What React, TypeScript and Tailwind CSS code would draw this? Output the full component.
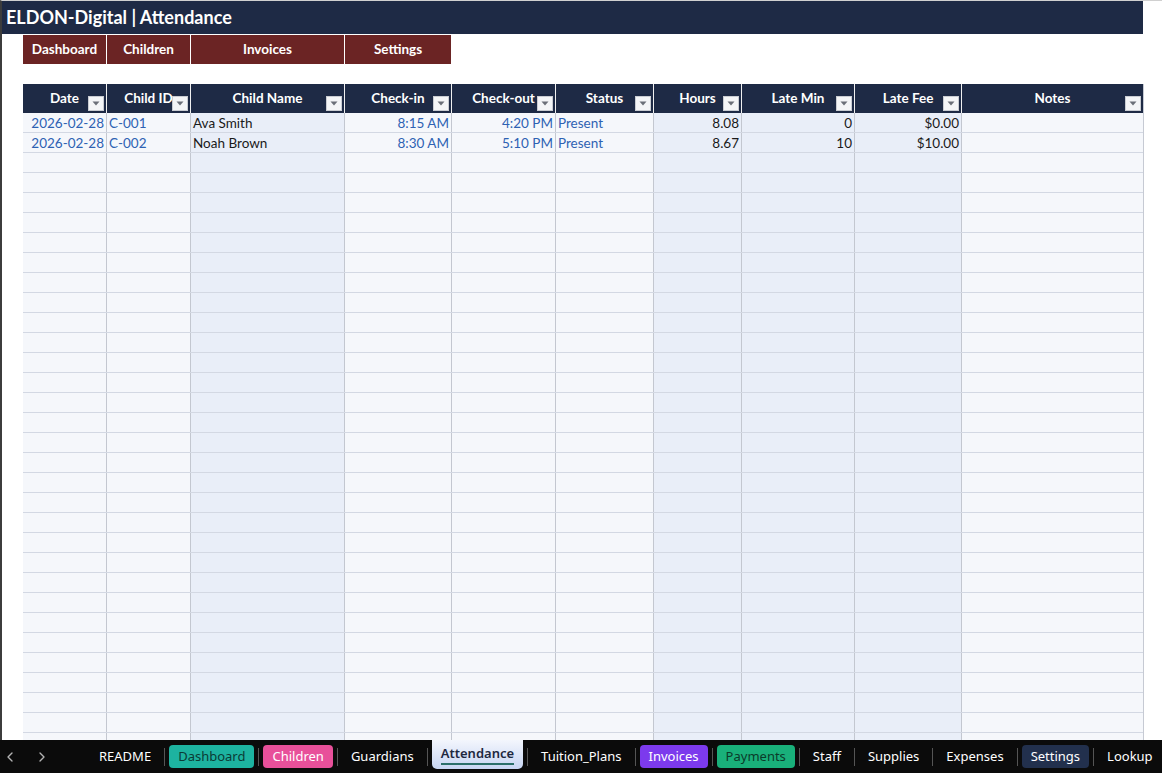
import React from "react";
import { ChevronLeft, ChevronRight } from "lucide-react";

type Col = { key: string; label: string; w: number; shade: boolean; align: "left" | "right" };

const cols: Col[] = [
  { key: "date", label: "Date", w: 84, shade: false, align: "right" },
  { key: "id", label: "Child ID", w: 84, shade: false, align: "left" },
  { key: "name", label: "Child Name", w: 154, shade: true, align: "left" },
  { key: "in", label: "Check-in", w: 107, shade: false, align: "right" },
  { key: "out", label: "Check-out", w: 104, shade: false, align: "right" },
  { key: "status", label: "Status", w: 98, shade: false, align: "left" },
  { key: "hours", label: "Hours", w: 88, shade: true, align: "right" },
  { key: "late", label: "Late Min", w: 113, shade: true, align: "right" },
  { key: "fee", label: "Late Fee", w: 107, shade: true, align: "right" },
  { key: "notes", label: "Notes", w: 181, shade: false, align: "left" },
];

const blue = new Set(["date", "id", "in", "out", "status"]);

const rows: Record<string, string>[] = [
  { date: "2026-02-28", id: "C-001", name: "Ava Smith", in: "8:15 AM", out: "4:20 PM", status: "Present", hours: "8.08", late: "0", fee: "$0.00", notes: "" },
  { date: "2026-02-28", id: "C-002", name: "Noah Brown", in: "8:30 AM", out: "5:10 PM", status: "Present", hours: "8.67", late: "10", fee: "$10.00", notes: "" },
];

const empty = Array.from({ length: 30 }, () => ({} as Record<string, string>));

const nav = [
  { label: "Dashboard", w: 84 },
  { label: "Children", w: 84 },
  { label: "Invoices", w: 154 },
  { label: "Settings", w: 107 },
];

type Tab = { label: string; cls?: string; active?: boolean };
const tabs: Tab[] = [
  { label: "README" },
  { label: "Dashboard", cls: "bg-[#1db3a0] text-[#0b3b35]" },
  { label: "Children", cls: "bg-[#e8509a] text-white" },
  { label: "Guardians" },
  { label: "Attendance", active: true },
  { label: "Tuition_Plans" },
  { label: "Invoices", cls: "bg-[#7c3aed] text-white" },
  { label: "Payments", cls: "bg-[#19b07a] text-[#0b3b2a]" },
  { label: "Staff" },
  { label: "Supplies" },
  { label: "Expenses" },
  { label: "Settings", cls: "bg-[#22304d] text-white" },
  { label: "Lookup" },
];

function FilterBtn() {
  return (
    <div className="absolute right-[2px] bottom-[2px] w-[16px] h-[15px] bg-[#f4f5f7] border border-[#c9ccd2] flex items-center justify-center">
      <svg width="8" height="5" viewBox="0 0 8 5">
        <path d="M0.5 0.5 L7.5 0.5 L4 4.5 Z" fill="#6b6f78" />
      </svg>
    </div>
  );
}

export default function App() {
  const font = { fontFamily: "Lato, 'Noto Sans', sans-serif" };
  return (
    <div className="w-[1162px] h-[773px] bg-white overflow-hidden flex flex-col" style={font}>
      <div className="flex-1 flex flex-col border-l-2 border-[#3c3c3c] border-t border-t-[#d0d0d0] overflow-hidden">
        <div className="w-[1141px] h-[33px] bg-[#1e2a45] flex items-center pl-[4px] text-white font-bold text-[18px] shrink-0">
          ELDON-Digital | Attendance
        </div>
        <div className="flex ml-[21px] mt-[1px] shrink-0">
          {nav.map((n) => (
            <div
              key={n.label}
              className="h-[29px] bg-[#6b2424] border-r border-white flex items-center justify-center text-white font-bold text-[13.5px]"
              style={{ width: n.w }}
            >
              {n.label}
            </div>
          ))}
        </div>
        <div className="ml-[21px] mt-[20px] w-[1121px] border-r border-[#c6cad3]">
          <div className="flex h-[29px] bg-[#1e2a45]">
            {cols.map((c) => (
              <div
                key={c.key}
                className="relative h-full border-r border-[#f0f0f0] last:border-r-0 flex items-center justify-center text-white font-bold text-[13.5px]"
                style={{ width: c.w }}
              >
                <span className="-mt-[1px]">{c.label}</span>
                <FilterBtn />
              </div>
            ))}
          </div>
          {[...rows, ...empty].map((r, i) => (
            <div key={i} className="flex h-[20px] border-b border-[#d3d8e3]">
              {cols.map((c) => (
                <div
                  key={c.key}
                  className={
                    "h-full border-r border-[#c3c7d0] last:border-r-0 flex items-center px-[2px] pt-[1px] text-[13.5px] " +
                    (c.shade ? "bg-[#e9eef8] " : "bg-[#f5f7fb] ") +
                    (c.align === "right" ? "justify-end " : "justify-start ") +
                    (blue.has(c.key) ? "text-[#2e62b3]" : "text-[#1a1a1a]")
                  }
                  style={{ width: c.w }}
                >
                  {r[c.key] ?? ""}
                </div>
              ))}
            </div>
          ))}
        </div>
      </div>
      <div
        className="h-[33px] bg-[#0b0b0b] flex items-center shrink-0 text-[13px]"
        style={{ fontFamily: "'Noto Sans', 'Open Sans', sans-serif" }}
      >
        <div className="flex items-center shrink-0 pl-[2px] gap-[16px] text-[#b4b4b4]">
          <ChevronLeft size={16} strokeWidth={2} />
          <ChevronRight size={16} strokeWidth={2} />
        </div>
        <div className="flex items-center ml-[36px] h-full shrink-0">
          {tabs.map((t, i) => (
            <React.Fragment key={t.label + i}>
              {i > 0 && <div className="w-px h-[18px] bg-[#555] shrink-0" />}
              {t.active ? (
                <div className="mx-[4px] h-[29px] -mt-[4px] px-[9px] rounded-b-[5px] bg-gradient-to-b from-[#f3f6fd] to-[#c8d6f3] text-[#1d2840] flex flex-col items-center justify-center shrink-0">
                  <span className="font-semibold leading-[18px]">{t.label}</span>
                  <div className="w-full h-[2px] bg-[#2b6f6a] mt-[1px]" />
                </div>
              ) : t.cls ? (
                <div className={"mx-[4px] h-[23px] px-[9px] rounded-[4px] flex items-center shrink-0 " + t.cls}>{t.label}</div>
              ) : (
                <div className="px-[13px] text-white shrink-0">{t.label}</div>
              )}
            </React.Fragment>
          ))}
        </div>
      </div>
    </div>
  );
}
